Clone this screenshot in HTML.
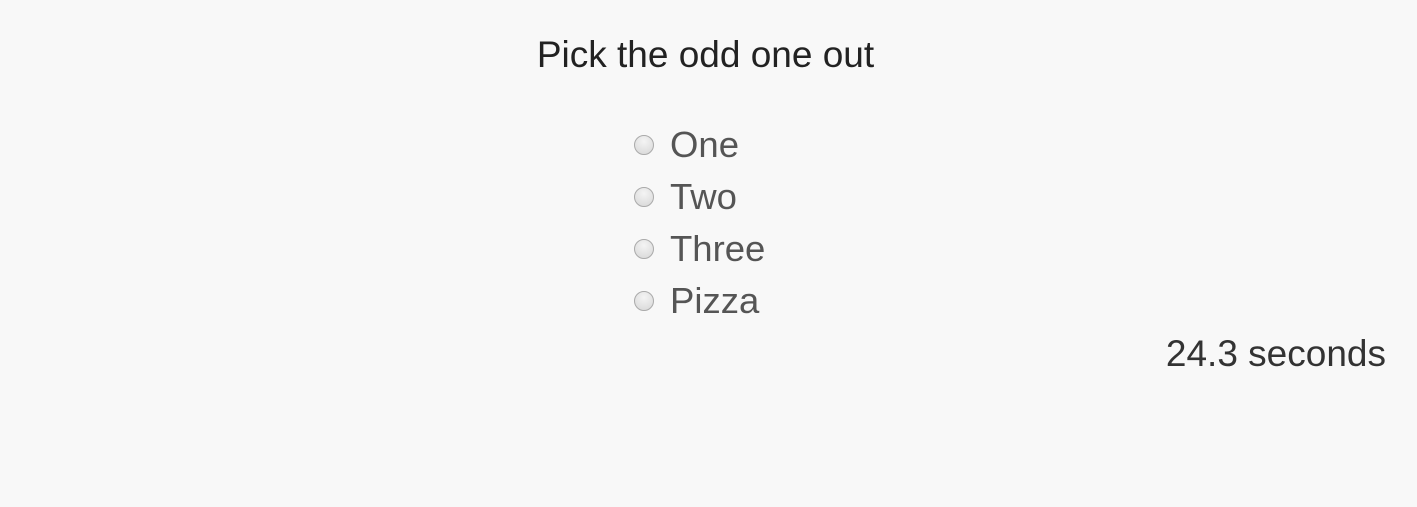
<html><head><style>
body{margin:0;background:#f8f8f8;width:1417px;height:507px;font-family:"Liberation Sans",sans-serif;position:relative;overflow:hidden}
.t{position:absolute;left:0;width:1411px;text-align:center;top:34px;font-size:37px;color:#222}
.o{position:absolute;left:670px;font-size:36.5px;color:#555;line-height:40px}
.r{position:absolute;left:634px;width:18px;height:18px;border-radius:50%;border:1px solid #aaa;background:radial-gradient(circle at 50% 30%,#f4f4f4,#d6d6d6)}
.s{position:absolute;right:31px;top:333px;font-size:37px;color:#333}
</style></head><body>
<div class="t">Pick the odd one out</div>
<div class="r" style="top:135px"></div><div class="o" style="top:125px">One</div>
<div class="r" style="top:187px"></div><div class="o" style="top:177px">Two</div>
<div class="r" style="top:239px"></div><div class="o" style="top:229px">Three</div>
<div class="r" style="top:291px"></div><div class="o" style="top:281px">Pizza</div>
<div class="s">24.3 seconds</div>
</body></html>
